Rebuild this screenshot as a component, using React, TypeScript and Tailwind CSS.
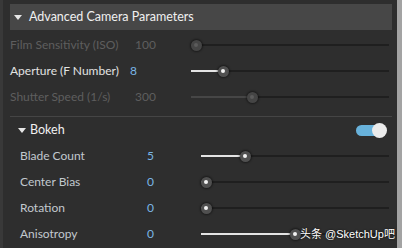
import React from 'react';

const font = { fontFamily: 'Lato, "Liberation Sans", "Noto Sans CJK SC", sans-serif' };

function Caret() {
  return (
    <svg width="8" height="5" viewBox="0 0 8 5" className="shrink-0">
      <polygon points="0,0 8,0 4,5" fill="#e6e6e6" />
    </svg>
  );
}

interface SliderProps {
  width: number;
  pos: number; // thumb center offset from left
  disabled?: boolean;
}

function Slider({ width, pos, disabled }: SliderProps) {
  return (
    <div className="relative h-[12px]" style={{ width }}>
      <div className="absolute left-0 right-0 top-[5px] h-[2px] bg-[#1f1f1f]" />
      <div
        className={`absolute left-0 top-[5px] h-[2px] ${disabled ? 'bg-[#464646]' : 'bg-[#e4e4e4]'}`}
        style={{ width: pos }}
      />
      <div
        className={`absolute top-[0.5px] flex h-[11px] w-[11px] items-center justify-center rounded-full shadow-[0_0_2px_1px_rgba(0,0,0,0.45)] ${disabled ? 'bg-[#454545]' : 'bg-[#505050]'}`}
        style={{ left: pos - 5.5 }}
      >
        <div className={`h-[4px] w-[4px] rounded-full ${disabled ? 'bg-[#5c5c5c]' : 'bg-[#f2f2f2]'}`} />
      </div>
    </div>
  );
}

interface TopRowProps {
  label: string;
  value: string;
  valueLeft: number;
  pos: number;
  disabled?: boolean;
}

function TopRow({ label, value, valueLeft, pos, disabled }: TopRowProps) {
  return (
    <div className="flex h-[26px] items-center">
      <div className={`w-[120px] shrink-0 whitespace-nowrap ${disabled ? 'text-[#5e5e5e]' : 'text-[#e2e2e2]'}`}>
        {label}
      </div>
      <div className="w-[61px] shrink-0" style={{ paddingLeft: valueLeft }}>
        <span className={disabled ? 'text-[#5e5e5e]' : 'text-[#7ab6e6]'}>{value}</span>
      </div>
      <Slider width={198} pos={pos} disabled={disabled} />
    </div>
  );
}

interface BokehRowProps {
  label: string;
  value: string;
  pos: number;
  children?: React.ReactNode;
}

function BokehRow({ label, value, pos, children }: BokehRowProps) {
  return (
    <div className="relative flex h-[26px] items-center pl-[10px]">
      <div className="w-[127px] shrink-0 text-[#c2c9ce]">{label}</div>
      <div className="w-[54px] shrink-0 text-[#7ab6e6]">{value}</div>
      <Slider width={188} pos={pos} />
      {children}
    </div>
  );
}

export default function App() {
  return (
    <div className="flex h-[248px] w-[402px] overflow-hidden bg-[#2e2e2e] text-[12px]" style={font}>
      <div className="w-[3px] shrink-0 bg-[#393939]" />
      <div className="flex-1 pl-[7px] pr-[5px] pt-[4px]">
        <div className="flex h-[26px] items-center gap-[7px] bg-[#474747] pl-[4px] text-[12.5px] text-[#f0f0f0]">
          <Caret />
          <span>Advanced Camera Parameters</span>
        </div>
        <div className="mt-[2px]">
          <TopRow label="Film Sensitivity (ISO)" value="100" valueLeft={5} pos={5} disabled />
          <TopRow label="Aperture (F Number)" value="8" valueLeft={0} pos={32} />
          <TopRow label="Shutter Speed (1/s)" value="300" valueLeft={5} pos={61} disabled />
        </div>
        <div className="mt-[6px] h-px bg-[#454545]" />
        <div className="flex h-[26px] items-center pl-[8px] pr-[5px] text-[12.5px] text-[#f0f0f0]">
          <Caret />
          <span className="ml-[4px]">Bokeh</span>
          <div className="relative ml-auto h-[15px] w-[31px]">
            <div className="absolute left-0 top-[2px] h-[11px] w-[24px] rounded-full bg-[#68b2db]" />
            <div className="absolute right-0 top-0 h-[15px] w-[15px] rounded-full bg-[#ebebeb]" />
          </div>
        </div>
        <BokehRow label="Blade Count" value="5" pos={44} />
        <BokehRow label="Center Bias" value="0" pos={5} />
        <BokehRow label="Rotation" value="0" pos={5} />
        <BokehRow label="Anisotropy" value="0" pos={94}>
          <span
            className="absolute left-[290px] top-[5px] whitespace-nowrap text-[11px] text-white [text-shadow:0_0_2px_rgba(0,0,0,0.8)]"
            style={{ fontFamily: '"Liberation Sans", "Noto Sans CJK SC", sans-serif' }}
          >
            头条 @SketchUp吧
          </span>
        </BokehRow>
      </div>
      <div className="w-[5px] shrink-0 bg-[#a3a3a3]" />
    </div>
  );
}
